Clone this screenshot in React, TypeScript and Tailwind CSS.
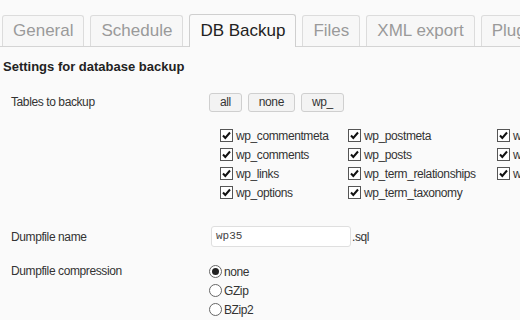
import React from "react";

const tabs = ["General", "Schedule", "DB Backup", "Files", "XML export", "Plugins"];

const col1 = ["wp_commentmeta", "wp_comments", "wp_links", "wp_options"];
const col2 = ["wp_postmeta", "wp_posts", "wp_term_relationships", "wp_term_taxonomy"];
const col3 = ["wp_usermeta", "wp_users", "wp_wfBlocks"];

const Check: React.FC<{ label: string }> = ({ label }) => (
  <label className="flex h-[19px] items-center gap-[2px] whitespace-nowrap">
    <span className="flex h-[13px] w-[13px] shrink-0 items-center justify-center border border-[#555] bg-white">
      <svg width="11" height="11" viewBox="0 0 11 11">
        <path d="M2 5.5 L4.3 8 L9 2.5" fill="none" stroke="#111" strokeWidth="2" />
      </svg>
    </span>
    <span className="pl-[1px]">{label}</span>
  </label>
);

const Radio: React.FC<{ label: string; on?: boolean }> = ({ label, on }) => (
  <label className="flex h-[19px] items-center gap-[2px]">
    <span className="flex h-[13px] w-[13px] items-center justify-center rounded-full border border-[#666] bg-white">
      {on && <span className="h-[7px] w-[7px] rounded-full bg-[#222]" />}
    </span>
    <span>{label}</span>
  </label>
);

export default function App() {
  return (
    <div
      className="h-[320px] w-[520px] overflow-hidden bg-[#fafafa] text-[12px] tracking-[-0.4px] text-[#333]"
      style={{ fontFamily: '"Liberation Sans", Arial, sans-serif' }}
    >
      {/* tabs */}
      <div className="mt-[14px] flex h-[33px] items-end gap-[6px] whitespace-nowrap border-b border-[#d4d4d4] pl-[2px] tracking-normal">
        {tabs.map((t) =>
          t === "DB Backup" ? (
            <div
              key={t}
              className="-mb-px flex h-[33px] items-center rounded-t-[3px] border border-b-0 border-[#cfcfcf] bg-[#fafafa] px-[10px] text-[17px] text-[#222]"
            >
              {t}
            </div>
          ) : (
            <div
              key={t}
              className="flex h-[31px] items-center rounded-t-[3px] border border-b-0 border-[#dcdcdc] bg-[#f7f7f7] px-[10px] text-[17px] text-[#9a9a9a]"
            >
              {t}
            </div>
          )
        )}
      </div>

      <div className="mt-[13px] pl-[3px] text-[13px] font-bold leading-[14px] tracking-normal text-[#222]">
        Settings for database backup
      </div>

      {/* tables */}
      <div className="mt-[19px] flex">
        <div className="w-[209px] shrink-0 pl-[11px] pt-[1px] leading-[16px]">Tables to backup</div>
        <div className="flex flex-col">
          <div className="flex gap-[6px]">
            {["all", "none", "wp_"].map((b) => (
              <button
                key={b}
                className="h-[19px] rounded-[3px] border border-[#cfcfcf] bg-[#f3f3f3] px-[10px] text-[12px] leading-[17px] text-[#333]"
              >
                {b}
              </button>
            ))}
          </div>
          <div className="mt-[14px] flex pl-[11px]">
            <div className="flex w-[128px] flex-col">
              {col1.map((c) => (
                <Check key={c} label={c} />
              ))}
            </div>
            <div className="flex w-[149px] flex-col">
              {col2.map((c) => (
                <Check key={c} label={c} />
              ))}
            </div>
            <div className="flex flex-col">
              {col3.map((c) => (
                <Check key={c} label={c} />
              ))}
            </div>
          </div>
        </div>
      </div>

      {/* dumpfile name */}
      <div className="mt-[24px] flex items-center">
        <div className="w-[211px] shrink-0 pl-[11px]">Dumpfile name</div>
        <div className="flex h-[21px] w-[140px] items-center rounded-[3px] border border-[#dfdfdf] bg-white px-[4px] font-['Liberation_Mono',monospace] text-[11px] tracking-normal text-[#444]">
          wp35
        </div>
        <span className="pl-[1px]">.sql</span>
      </div>

      {/* compression */}
      <div className="mt-[15px] flex">
        <div className="w-[209px] shrink-0 pl-[11px] pt-[1px] leading-[16px]">Dumpfile compression</div>
        <div className="flex flex-col">
          <Radio label="none" on />
          <Radio label="GZip" />
          <Radio label="BZip2" />
        </div>
      </div>
    </div>
  );
}
